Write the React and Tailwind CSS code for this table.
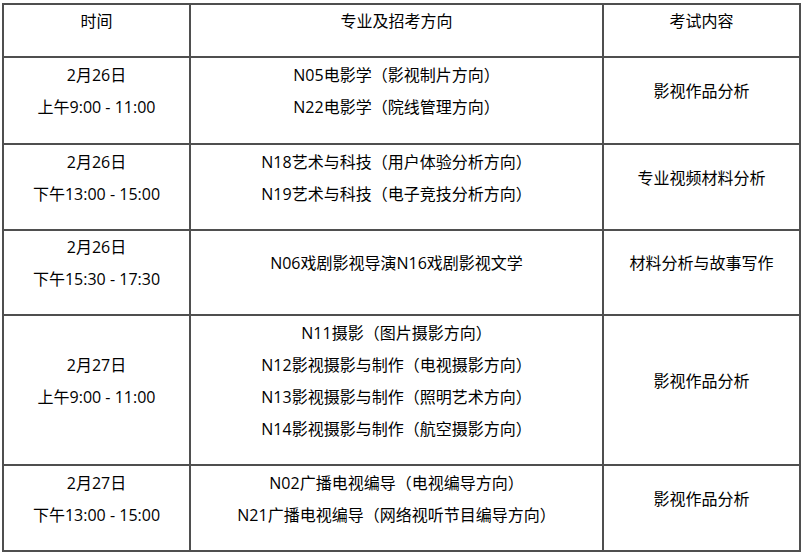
import React from "react";

const rows = [
  {
    h: "h-[87px]",
    time: ["2月26日", "上午9:00 - 11:00"],
    majors: ["N05电影学（影视制片方向）", "N22电影学（院线管理方向）"],
    exam: "影视作品分析",
  },
  {
    h: "h-[86px]",
    time: ["2月26日", "下午13:00 - 15:00"],
    majors: ["N18艺术与科技（用户体验分析方向）", "N19艺术与科技（电子竞技分析方向）"],
    exam: "专业视频材料分析",
  },
  {
    h: "h-[85px]",
    time: ["2月26日", "下午15:30 - 17:30"],
    majors: ["N06戏剧影视导演N16戏剧影视文学"],
    exam: "材料分析与故事写作",
  },
  {
    h: "h-[150px]",
    time: ["2月27日", "上午9:00 - 11:00"],
    majors: [
      "N11摄影（图片摄影方向）",
      "N12影视摄影与制作（电视摄影方向）",
      "N13影视摄影与制作（照明艺术方向）",
      "N14影视摄影与制作（航空摄影方向）",
    ],
    exam: "影视作品分析",
  },
  {
    h: "h-[86px]",
    time: ["2月27日", "下午13:00 - 15:00"],
    majors: ["N02广播电视编导（电视编导方向）", "N21广播电视编导（网络视听节目编导方向）"],
    exam: "影视作品分析",
  },
];

const Cell = ({ lines, h }) => (
  <div className={`${h} flex flex-col items-center justify-center border-r-2 border-b-2 border-[#4f4f4f] pb-[19px] text-center`}>
    {lines.map((l, i) => (
      <p key={i} className="leading-[32px] whitespace-nowrap">
        {l}
      </p>
    ))}
  </div>
);

export default function App() {
  return (
    <div
      className="w-[805px] h-[556px] bg-white text-black text-[16px] pt-[3px] pl-[2px]"
      style={{ fontFamily: '"Open Sans", "Noto Sans CJK SC", sans-serif' }}
    >
      <div className="grid grid-cols-[187px_413px_197px] w-[799px] border-l-2 border-t-2 border-[#4f4f4f]">
        <Cell h="h-[53px]" lines={["时间"]} />
        <Cell h="h-[53px]" lines={["专业及招考方向"]} />
        <Cell h="h-[53px]" lines={["考试内容"]} />
        {rows.map((r, i) => (
          <React.Fragment key={i}>
            <Cell h={r.h} lines={r.time} />
            <Cell h={r.h} lines={r.majors} />
            <Cell h={r.h} lines={[r.exam]} />
          </React.Fragment>
        ))}
      </div>
    </div>
  );
}
